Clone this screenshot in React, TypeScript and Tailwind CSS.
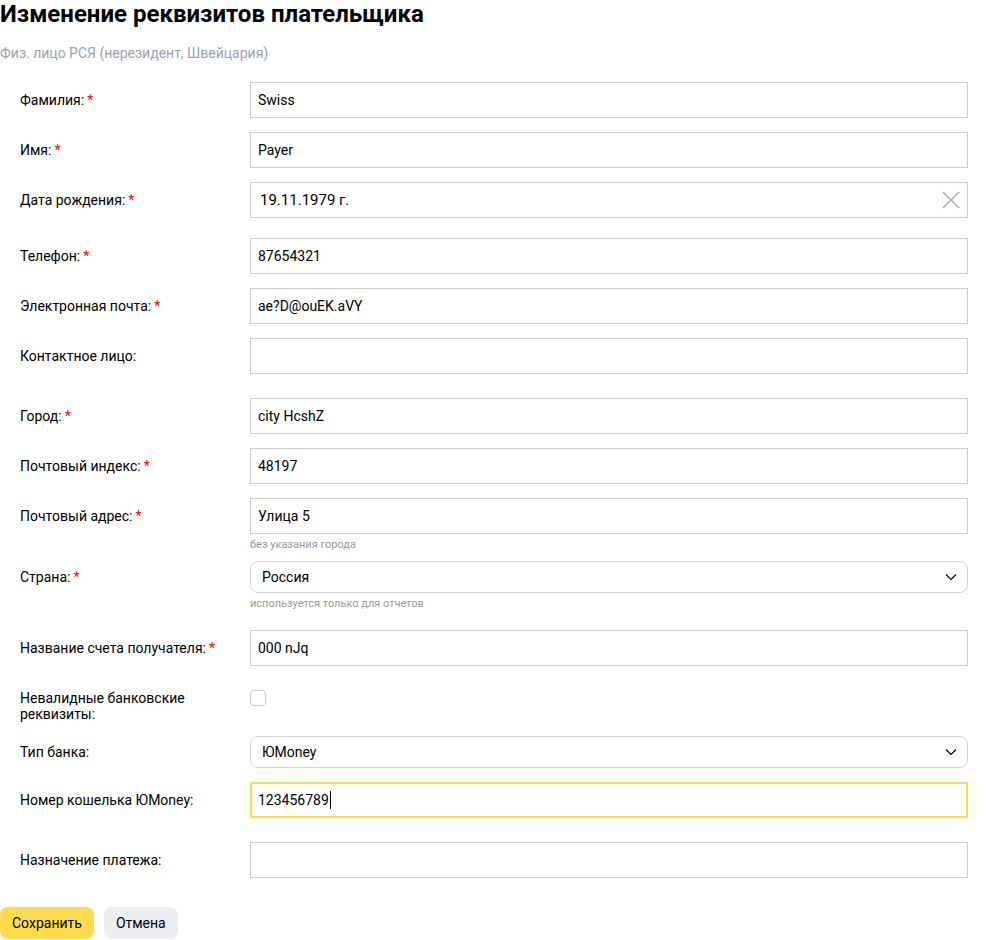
import React from "react";

const Star = () => <span className="text-[#ff0000] ml-[3px]">*</span>;

function Label({ text, req }: { text: string; req?: boolean }) {
  return (
    <div className="w-[250px] shrink-0 pl-[20px] pr-[20px] text-[14px] leading-[16px] text-[#000]">
      {text}
      {req && <Star />}
    </div>
  );
}

function TextInput({ value, focused }: { value: string; focused?: boolean }) {
  return (
    <div
      className={
        "flex-1 h-[36px] flex items-center text-[14px] text-[#000] " +
        (focused
          ? "border-2 border-[#ffdb4d] pl-[6px]"
          : "border border-[#cccccc] pl-[7px]")
      }
    >
      <span>{value}</span>
      {focused && <span className="inline-block w-[1px] h-[18px] bg-black ml-[1px]" />}
    </div>
  );
}

function Row({
  label,
  req,
  mt,
  children,
  hint,
}: {
  label: string;
  req?: boolean;
  mt: string;
  children: React.ReactNode;
  hint?: string;
}) {
  return (
    <div className={mt}>
      <div className="flex items-center">
        <Label text={label} req={req} />
        {children}
      </div>
      {hint && (
        <div className="pl-[250px] text-[11px] leading-[13px] text-[#999999] mt-[4px]">{hint}</div>
      )}
    </div>
  );
}

function Select({ value }: { value: string }) {
  return (
    <div className="flex-1 h-[32px] rounded-[8px] border border-[#d4d4d4] flex items-center justify-between pl-[11px] pr-[10px] text-[14px] text-[#000]">
      <span>{value}</span>
      <svg width="12" height="8" viewBox="0 0 12 8" fill="none">
        <path d="M1 1.5L6 6.5L11 1.5" stroke="#000" strokeWidth="1.2" />
      </svg>
    </div>
  );
}

export default function App() {
  return (
    <div
      className="w-[1000px] h-[940px] bg-white relative"
      style={{ fontFamily: "Roboto, 'Noto Sans', sans-serif" }}
    >
      <div className="w-[968px]">
        <h1 className="text-[24px] leading-[28px] font-bold text-[#000] pt-0">
          Изменение реквизитов плательщика
        </h1>
        <div className="mt-[17px] text-[14px] leading-[16px] text-[#9ba2b6]">
          Физ. лицо РСЯ (нерезидент, Швейцария)
        </div>

        <Row label="Фамилия:" req mt="mt-[21px]">
          <TextInput value="Swiss" />
        </Row>
        <Row label="Имя:" req mt="mt-[14px]">
          <TextInput value="Payer" />
        </Row>
        <Row label="Дата рождения:" req mt="mt-[14px]">
          <div className="flex-1 h-[36px] border border-[#cccccc] flex items-center justify-between pl-[9px] pr-[7px] text-[15px] text-[#000]">
            <span>19.11.1979 г.</span>
            <svg width="18" height="18" viewBox="0 0 18 18" fill="none">
              <path d="M1 1L17 17M17 1L1 17" stroke="#a8a8a8" strokeWidth="1.2" />
            </svg>
          </div>
        </Row>
        <Row label="Телефон:" req mt="mt-[20px]">
          <TextInput value="87654321" />
        </Row>
        <Row label="Электронная почта:" req mt="mt-[14px]">
          <TextInput value="ae?D@ouEK.aVY" />
        </Row>
        <Row label="Контактное лицо:" mt="mt-[14px]">
          <TextInput value="" />
        </Row>
        <Row label="Город:" req mt="mt-[24px]">
          <TextInput value="city HcshZ" />
        </Row>
        <Row label="Почтовый индекс:" req mt="mt-[14px]">
          <TextInput value="48197" />
        </Row>
        <Row label="Почтовый адрес:" req mt="mt-[14px]" hint="без указания города">
          <TextInput value="Улица 5" />
        </Row>
        <Row label="Страна:" req mt="mt-[10px]" hint="используется только для отчетов">
          <Select value="Россия" />
        </Row>
        <Row label="Название счета получателя:" req mt="mt-[20px]">
          <TextInput value="000 nJq" />
        </Row>
        <div className="mt-[24px] flex items-start">
          <div className="w-[250px] shrink-0 pl-[20px] pr-[20px] text-[14px] leading-[16px] text-[#000] pt-[0px]">
            Невалидные банковские реквизиты:
          </div>
          <div className="w-[16px] h-[16px] rounded-[4px] border border-[#c8c8c8]" />
        </div>
        <Row label="Тип банка:" mt="mt-[14px]">
          <Select value="ЮMoney" />
        </Row>
        <Row label="Номер кошелька ЮMoney:" mt="mt-[14px]">
          <TextInput value="123456789" focused />
        </Row>
        <Row label="Назначение платежа:" mt="mt-[24px]">
          <TextInput value="" />
        </Row>
        <div className="mt-[29px] flex gap-[10px]">
          <button className="h-[32px] px-[12px] rounded-[8px] bg-[#ffdb4d] text-[14px] text-[#000]">
            Сохранить
          </button>
          <button className="h-[32px] px-[12px] rounded-[8px] bg-[#edeef2] text-[14px] text-[#000]">
            Отмена
          </button>
        </div>
      </div>
    </div>
  );
}
